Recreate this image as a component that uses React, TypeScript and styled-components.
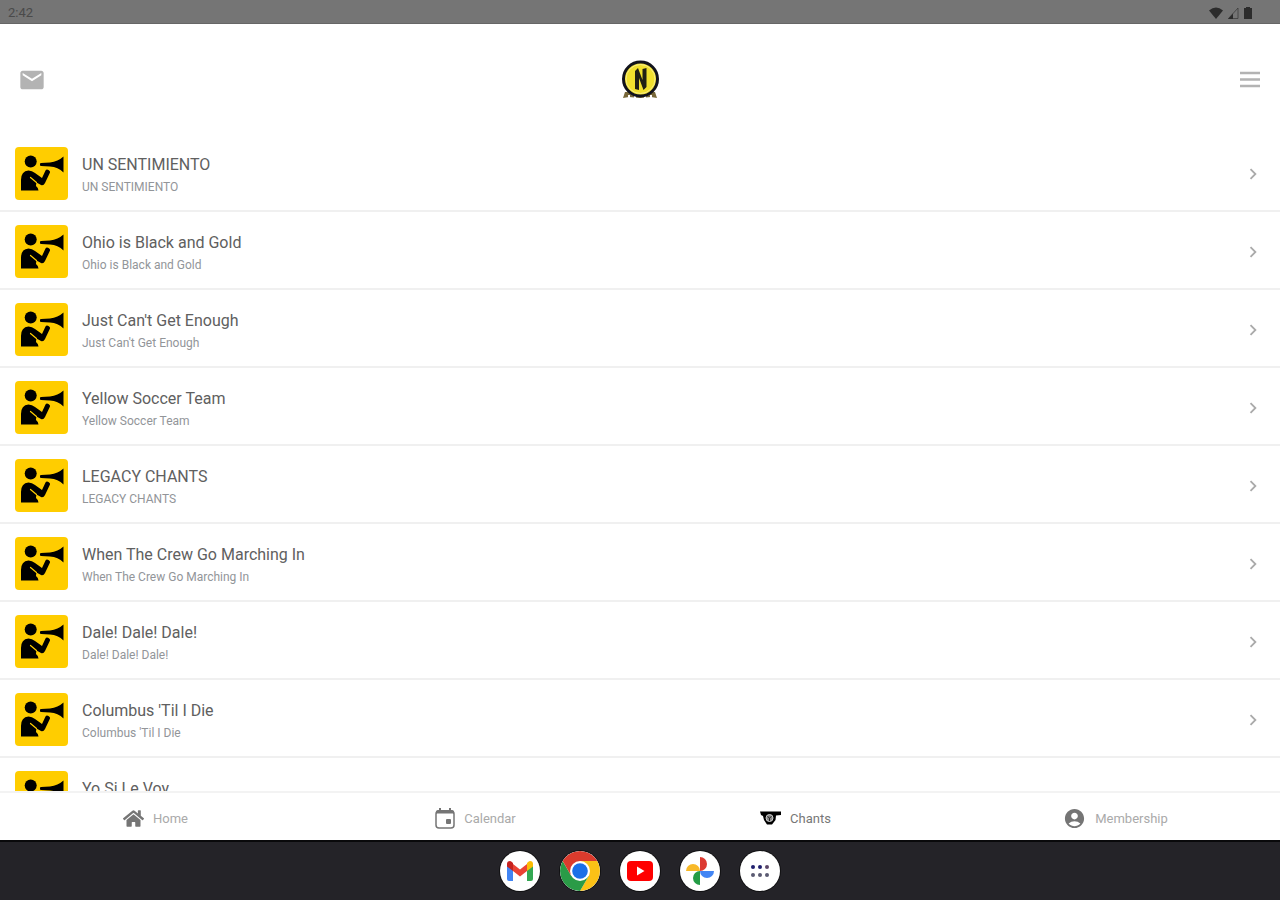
import React from "react";
import styled, { createGlobalStyle } from "styled-components";
import { MdEmail, MdAccountCircle, MdChevronRight } from "react-icons/md";
import { FaHome } from "react-icons/fa";

const GlobalStyle = createGlobalStyle`
  * { box-sizing: border-box; }
  body { margin: 0; background: #fff; font-family: Roboto, "Liberation Sans", sans-serif; }
  button { border: 0; padding: 0; background: none; font: inherit; color: inherit; cursor: pointer; }
  a { color: inherit; text-decoration: none; }
  svg { display: block; flex: none; }
`;

const Screen = styled.div`
  display: flex;
  flex-direction: column;
  height: 100vh;
  overflow: hidden;
`;

const StatusBar = styled.div`
  display: flex;
  align-items: center;
  justify-content: space-between;
  flex: none;
  height: 24px;
  padding: 2px 26px 0 8px;
  background: #757575;
  border-bottom: 1px solid #666;
  color: #4a4a4a;
  font-size: 13px;
`;

const StatusIcons = styled.div`
  display: flex;
  align-items: center;
  gap: 3px;
  color: #2c2c2c;
`;

const Header = styled.header`
  display: grid;
  grid-template-columns: 1fr auto 1fr;
  align-items: center;
  flex: none;
  height: 110px;
  padding: 2px 18px 0;
  color: #b3b3b3;
`;

const HeaderButton = styled.button<{ $end?: boolean }>`
  justify-self: ${(p) => (p.$end ? "end" : "start")};
`;

const List = styled.ul`
  flex: 1;
  min-height: 0;
  margin: 0;
  padding: 0;
  list-style: none;
  overflow: hidden;
`;

const Row = styled.a`
  display: flex;
  align-items: center;
  height: 78px;
  padding: 13px 16px 10px 15px;
  border-bottom: 2px solid #f0f0f0;
`;

const Thumb = styled.span`
  flex: none;
  width: 53px;
  height: 53px;
  border-radius: 4px;
  background: #ffcd00;
  overflow: hidden;
`;

const RowText = styled.span`
  display: flex;
  flex: 1;
  flex-direction: column;
  gap: 4px;
  min-width: 0;
  padding: 2px 0 0 14px;
`;

const Title = styled.span`
  color: #606060;
  font-size: 16px;
  line-height: 20px;
`;

const Subtitle = styled.span`
  color: #929599;
  font-size: 12px;
  line-height: 16px;
`;

const TabBar = styled.nav`
  display: grid;
  grid-template-columns: repeat(4, 1fr);
  flex: none;
  height: 49px;
  border-top: 2px solid #f3f3f3;
`;

const Tab = styled.a<{ $active?: boolean }>`
  display: flex;
  align-items: center;
  justify-content: center;
  gap: 9px;
  padding: 3px 9px 0 0;
  color: ${(p) => (p.$active ? "#777" : "#aaa")};
  font-size: 13px;

  svg { color: ${(p) => (p.$active ? "#000" : "#757575")}; }
`;

const Dock = styled.div`
  display: flex;
  align-items: center;
  justify-content: center;
  gap: 20px;
  flex: none;
  height: 60px;
  border-top: 2px solid #09090b;
  background: #242328;
`;

const DockButton = styled.button`
  display: grid;
  place-items: center;
  width: 40px;
  height: 40px;
  border-radius: 50%;
  background: #fff;
  overflow: hidden;
  box-shadow: 0 0 0 1px #111113;
`;

const chants = [
  "UN SENTIMIENTO",
  "Ohio is Black and Gold",
  "Just Can't Get Enough",
  "Yellow Soccer Team",
  "LEGACY CHANTS",
  "When The Crew Go Marching In",
  "Dale! Dale! Dale!",
  "Columbus 'Til I Die",
  "Yo Si Le Voy",
];

const ChanterArt = () => (
  <svg width="53" height="53" viewBox="0 0 53 53" aria-hidden="true">
    <circle cx="15.700" cy="14.500" r="6" />
    <path d="M25 17Q25 16 26 16L35 15.500Q43 14.500 48.500 9.500V25.500Q43 20 35 19.500L26 19Q25 19 25 18Z" />
    <path d="M6 43.500V33Q6 24 13.500 23.500Q17 23.500 20 26L27 31L30.500 23.500Q31.500 22 33.500 23Q35.500 24 35 25.500L30 36Q28.500 39 26 38L21.500 35.500Q21 37.500 21 39Q23.500 41 23.500 43.500Z" />
    <path d="M15.500 30.500L21.500 35.500" stroke="#ffcd00" strokeWidth="1.200" strokeLinecap="round" />
  </svg>
);

const ClubBadge = () => (
  <svg width="40" height="40" viewBox="0 0 40 40" role="img" aria-label="Nordecke">
    <path d="M5 32L3 38L9 37L20 38L31 37L37 38L35 32Z" fill="#78683a" />
    <path d="M9 35v4M15 36v3M25 36v3M31 35v4" stroke="#fff" strokeWidth="2" />
    <circle cx="20.500" cy="19" r="17" fill="#f1e02e" stroke="#12131d" strokeWidth="3" />
    <circle cx="20.500" cy="19" r="14.500" fill="none" stroke="#f7ee8a" strokeWidth="1" />
    <path d="M15 29V11L18 8L22.500 20V9L26.500 8V27L23.500 30L19 18V30Z" fill="#202014" />
  </svg>
);

const MenuIcon = () => (
  <svg width="24" height="24" viewBox="0 0 24 24" aria-hidden="true">
    <path d="M2 5h20M2 11.500h20M2 18h20" stroke="currentColor" strokeWidth="2.500" />
  </svg>
);

const WifiIcon = () => (
  <svg width="16" height="14" viewBox="0 0 16 14" aria-hidden="true">
    <path d="M8 13L1 4.500Q8-1.500 15 4.500Z" fill="currentColor" />
  </svg>
);

const SignalIcon = () => (
  <svg width="12" height="14" viewBox="0 0 12 14" aria-hidden="true">
    <path d="M1.500 12.500L11 2V12.500Z" fill="none" stroke="currentColor" opacity=".6" />
    <path d="M1 13L6 7.500V13Z" fill="currentColor" />
  </svg>
);

const BatteryIcon = () => (
  <svg width="12" height="14" viewBox="0 0 12 14" aria-hidden="true">
    <path d="M4 1h4v1h2v11H2V2h2Z" fill="currentColor" />
  </svg>
);

const CalendarIcon = () => (
  <svg width="20" height="22" viewBox="0 0 20 22" aria-hidden="true">
    <rect x="1" y="4" width="18" height="17" rx="3" fill="none" stroke="currentColor" strokeWidth="1.500" />
    <path d="M1 6.500V5Q1 3 3 3H4V1H6V3H14V1H16V3H17Q19 3 19 5V6.500Z" fill="currentColor" />
    <rect x="11" y="12" width="5" height="5" rx="1" fill="currentColor" />
  </svg>
);

const DrumIcon = () => (
  <svg width="21" height="22" viewBox="0 0 21 22" aria-hidden="true">
    <path d="M0 4.500H21V8L16 8.500L15.500 13L12 17.500H7L4 13L3 9L1 8Z" fill="currentColor" />
    <circle cx="9.500" cy="11" r="3.500" fill="#888" stroke="#ccc" strokeWidth="1" />
    <path d="M7.500 9.500L9.500 11L11.500 9.500M9.500 11V14" fill="none" stroke="#222" />
  </svg>
);

const GmailIcon = () => (
  <svg width="28" height="22" viewBox="0 0 28 22" aria-hidden="true">
    <path d="M1 4L7 8V21H3Q1 21 1 19Z" fill="#4285f4" />
    <path d="M21 8L27 4V19Q27 21 25 21H21Z" fill="#34a853" />
    <path d="M7 4L14 9.500L21 4V11L14 16.500L7 11Z" fill="#ea4335" />
    <path d="M1 4Q1 1 4 1Q5 1 7 3V11L1 6.500Z" fill="#c5221f" />
    <path d="M27 4Q27 1 24 1Q23 1 21 3V11L27 6.500Z" fill="#fbbc04" />
  </svg>
);

const ChromeIcon = () => (
  <svg width="40" height="40" viewBox="0 0 40 40" aria-hidden="true">
    <path d="M20 20L2.700 10A20 20 0 0 1 37.300 10Z" fill="#db3b2d" />
    <path d="M20 10H37.300A20 20 0 0 1 20 40L28.700 25Z" fill="#fbc116" />
    <path d="M11.300 25L2.700 10A20 20 0 0 0 20 40L28.700 25Z" fill="#2a9b47" />
    <path d="M2.700 10L11.300 25L20 20V10Z" fill="#db3b2d" />
    <circle cx="20" cy="20" r="10" fill="#fff" />
    <circle cx="20" cy="20" r="7.800" fill="#1b6fe8" />
  </svg>
);

const YoutubeIcon = () => (
  <svg width="28" height="20" viewBox="0 0 28 20" aria-hidden="true">
    <rect x="1" width="26" height="20" rx="4" fill="#f00" />
    <path d="M11 5.500V14.500L18.500 10Z" fill="#fff" />
  </svg>
);

const PhotosIcon = () => (
  <svg width="30" height="30" viewBox="0 0 30 30" aria-hidden="true">
    <path d="M15 15V1A7 7 0 0 1 15 15Z" fill="#dc3a31" />
    <path d="M15 15H29A7 7 0 0 1 15 15Z" fill="#4285f4" />
    <path d="M15 15V29A7 7 0 0 1 15 15Z" fill="#249c46" />
    <path d="M15 15H1A7 7 0 0 1 15 15Z" fill="#f8b928" />
  </svg>
);

const AppsIcon = () => (
  <svg width="20" height="14" viewBox="0 0 20 14" aria-hidden="true">
    <g fill="#20206e">
      <circle cx="3" cy="3" r="2" />
      <circle cx="10" cy="3" r="2" />
      <circle cx="17" cy="3" r="2" fill="#5c4668" />
    </g>
    <g fill="#5a5a72">
      <circle cx="3" cy="11" r="2" />
      <circle cx="10" cy="11" r="2" />
      <circle cx="17" cy="11" r="2" />
    </g>
  </svg>
);

const tabs = [
  { label: "Home", icon: <FaHome size={21} /> },
  { label: "Calendar", icon: <CalendarIcon /> },
  { label: "Chants", icon: <DrumIcon />, active: true },
  { label: "Membership", icon: <MdAccountCircle size={23} /> },
];

const apps = [
  { name: "Gmail", icon: <GmailIcon /> },
  { name: "Chrome", icon: <ChromeIcon /> },
  { name: "YouTube", icon: <YoutubeIcon /> },
  { name: "Photos", icon: <PhotosIcon /> },
  { name: "All apps", icon: <AppsIcon /> },
];

export default function App() {
  return (
    <Screen>
      <GlobalStyle />
      <StatusBar>
        <span>2:42</span>
        <StatusIcons>
          <WifiIcon />
          <SignalIcon />
          <BatteryIcon />
        </StatusIcons>
      </StatusBar>
      <Header>
        <HeaderButton aria-label="Messages">
          <MdEmail size={28} />
        </HeaderButton>
        <ClubBadge />
        <HeaderButton $end aria-label="Menu">
          <MenuIcon />
        </HeaderButton>
      </Header>
      <List>
        {chants.map((name) => (
          <li key={name}>
            <Row href="#">
              <Thumb>
                <ChanterArt />
              </Thumb>
              <RowText>
                <Title>{name}</Title>
                <Subtitle>{name}</Subtitle>
              </RowText>
              <MdChevronRight size={22} color="#aaa" />
            </Row>
          </li>
        ))}
      </List>
      <TabBar>
        {tabs.map((t) => (
          <Tab key={t.label} href="#" $active={t.active} aria-current={t.active ? "page" : undefined}>
            {t.icon}
            {t.label}
          </Tab>
        ))}
      </TabBar>
      <Dock>
        {apps.map((a) => (
          <DockButton key={a.name} aria-label={a.name}>
            {a.icon}
          </DockButton>
        ))}
      </Dock>
    </Screen>
  );
}
